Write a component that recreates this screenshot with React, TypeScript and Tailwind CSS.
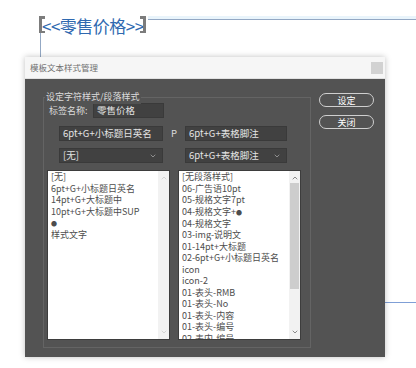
import { ChevronDown, ChevronUp } from "lucide-react";

const charStyles = [
  "[无]",
  "6pt+G+小标题日英名",
  "14pt+G+大标题中",
  "10pt+G+大标题中SUP",
  "●",
  "样式文字",
];

const paraStyles = [
  "[无段落样式]",
  "06-广告语10pt",
  "05-规格文字7pt",
  "04-规格文字+●",
  "04-规格文字",
  "03-img-说明文",
  "01-14pt+大标题",
  "02-6pt+G+小标题日英名",
  "icon",
  "icon-2",
  "01-表头-RMB",
  "01-表头-No",
  "01-表头-内容",
  "01-表头-编号",
  "02-表内-编号",
];

// the bullet is drawn much smaller than the CJK glyph in the original dialog
function ItemText({ text }: { text: string }) {
  const parts = text.split("●");
  return (
    <>
      {parts.map((p, i) => (
        <span key={i}>
          {p}
          {i < parts.length - 1 && <span className="text-[6px] align-middle">●</span>}
        </span>
      ))}
    </>
  );
}

function Field({ text, width, select }: { text: string; width: string; select?: boolean }) {
  return (
    <div
      className={`${width} h-[15px] flex items-center justify-between pl-[3px] pr-[5px] bg-[#414141] border border-[#3a3a3a] text-[#e4e4e4] text-[9.5px] leading-none`}
    >
      <span>{text}</span>
      {select && <ChevronDown size={8} strokeWidth={2} className="text-[#b5b5b5]" />}
    </div>
  );
}

function StyleList({ items, width, active }: { items: string[]; width: string; active?: boolean }) {
  return (
    <div className={`${width} h-[170px] flex bg-white border border-[#3d3d3d] overflow-hidden`}>
      <ul className="flex-1 pl-[3px] pt-[0px] text-[9px] leading-[11.5px] text-[#4d4d4d] whitespace-nowrap overflow-hidden">
        {items.map((item) => (
          <li key={item}>
            <ItemText text={item} />
          </li>
        ))}
      </ul>
      <div className="w-[11px] flex flex-col items-center bg-[#f2f2f2]">
        <ChevronUp
          size={8}
          strokeWidth={2}
          className={`mt-[3px] ${active ? "text-[#555]" : "text-[#c4c4c4]"}`}
        />
        <div className="flex-1 w-full pt-[1px] pb-[4px] px-[1px]">
          {active && <div className="h-[106px] w-full bg-[#cdcdcd]" />}
        </div>
        <ChevronDown
          size={8}
          strokeWidth={2}
          className={`mb-[3px] ${active ? "text-[#555]" : "text-[#c4c4c4]"}`}
        />
      </div>
    </div>
  );
}

function PillButton({ label }: { label: string }) {
  return (
    <button className="w-[55px] h-[14px] rounded-full border border-[#cfcfcf] text-white text-[9px] leading-none flex items-center justify-center">
      {label}
    </button>
  );
}

export default function App() {
  return (
    <div className="relative w-[416px] h-[368px] bg-white overflow-hidden font-['Noto_Sans_CJK_SC','Noto_Sans',sans-serif]">
      {/* text frame on the page canvas */}
      <div className="absolute left-[148px] top-[16px] right-0 h-[3px] bg-[#e9f4fb]" />
      <div className="absolute left-[148px] top-[19px] right-0 h-px bg-[#93a8c4]" />
      <div className="absolute left-[40px] top-[32px] w-px h-[26px] bg-[#93a8c4]" />
      <div className="absolute left-[385px] top-[302px] right-0 h-px bg-[#7f9fd6]" />

      <div className="absolute left-[39px] top-[16px] flex items-start">
        <div className="w-[6px] h-[17px] border-l-[3px] border-t-[3px] border-b-[2px] border-[#7c7c7c]" />
        <span className="text-[17px] leading-[20px] text-[#2f69b0] -ml-[3px] tracking-[-0.5px]">
          &lt;&lt;零售价格&gt;&gt;
        </span>
        <div className="w-[6px] h-[17px] border-r-[3px] border-t-[3px] border-b-[2px] border-[#7c7c7c] -ml-[4px]" />
      </div>

      {/* dialog */}
      <div className="absolute left-[25px] top-[57px] w-[360px] h-[300px] flex flex-col shadow-[0_0_6px_rgba(0,0,0,0.25)]">
        <div className="h-[22px] flex items-center justify-between pl-[5px] pr-[2px] bg-[#f6f6f6] border-b border-[#e2e2e2]">
          <span className="text-[8.5px] text-[#707070]">模板文本样式管理</span>
          <div className="w-[12px] h-[12px] bg-[#d2d2d2]" />
        </div>

        <div className="flex-1 flex bg-[#535353] pl-[18px] pt-[18px]">
          <div className="relative w-[268px] h-[251px] border border-[#646464]">
            <span className="absolute -top-[8px] left-[1px] px-[1px] bg-[#535353] text-[9px] leading-[14px] text-[#dcdcdc]">
              设定字符样式/段落样式
            </span>

            <div className="flex items-center pl-[5px] pt-[5px]">
              <span className="w-[44px] text-[9px] text-[#dcdcdc]">标签名称:</span>
              <Field text="零售价格" width="w-[71px]" />
            </div>

            <div className="flex items-center pl-[15px] mt-[8px]">
              <Field text="6pt+G+小标题日英名" width="w-[104px]" />
              <span className="w-[22px] text-center text-[9.5px] text-[#dcdcdc]">P</span>
              <Field text="6pt+G+表格脚注" width="w-[102px]" />
            </div>

            <div className="flex items-center pl-[15px] mt-[7px]">
              <Field text="[无]" width="w-[104px]" select />
              <span className="w-[22px]" />
              <Field text="6pt+G+表格脚注" width="w-[102px]" select />
            </div>

            <div className="flex gap-[8px] pl-[3px] mt-[7px]">
              <StyleList items={charStyles} width="w-[123px]" />
              <StyleList items={paraStyles} width="w-[123px]" active />
            </div>
          </div>

          <div className="flex flex-col gap-[8px] ml-[8px] -mt-[4px]">
            <PillButton label="设定" />
            <PillButton label="关闭" />
          </div>
        </div>
      </div>
    </div>
  );
}
